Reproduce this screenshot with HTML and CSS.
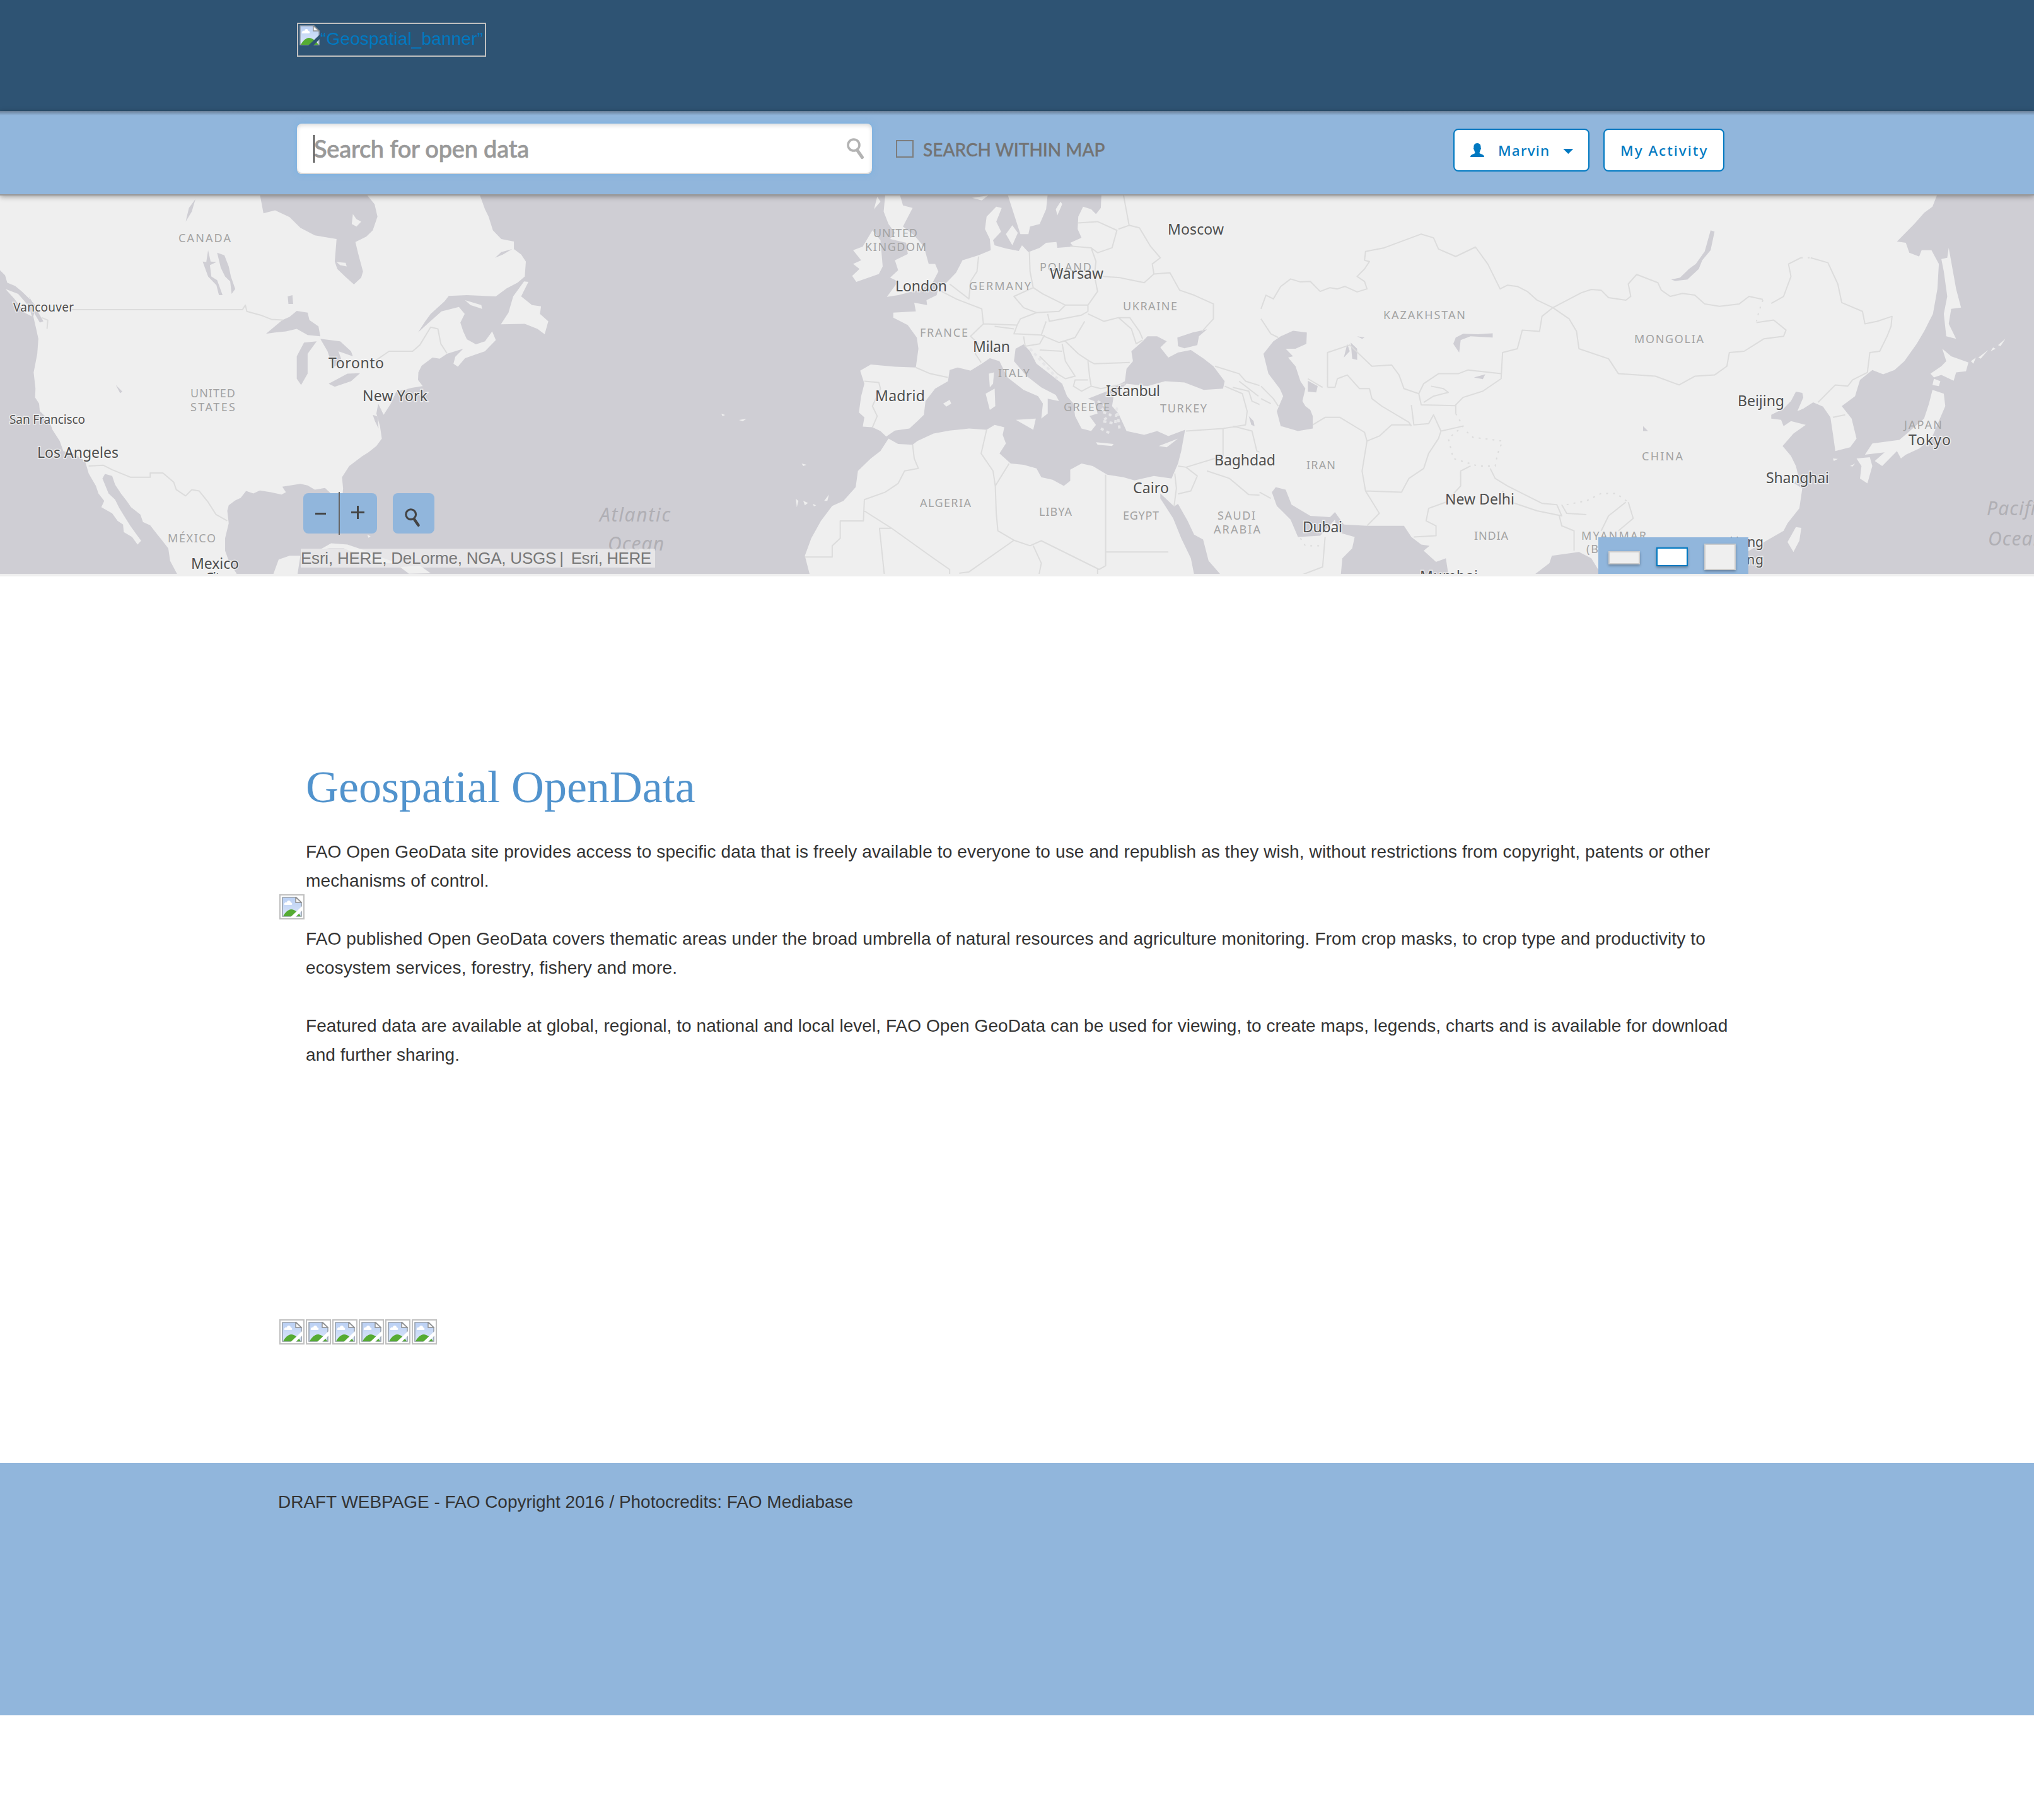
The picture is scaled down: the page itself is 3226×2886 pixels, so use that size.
FILE: index.html
```html
<!DOCTYPE html>
<html lang="en">
<head>
<meta charset="utf-8">
<title>Geospatial OpenData</title>
<link rel="stylesheet" href="styles.css">
</head>
<body>
<svg class="defs" width="0" height="0" aria-hidden="true">
  <defs>
    <linearGradient id="sky" x1="0" y1="0" x2="0" y2="1"><stop offset="0" stop-color="#b9cff3"/><stop offset="1" stop-color="#dbe6fa"/></linearGradient>
    <mask id="tear"><rect width="32" height="32" fill="#fff"/><path d="M14 32 33 14 33 21 22 32Z" fill="#000"/></mask>
    <symbol id="broken" viewBox="0 0 32 32">
      <g mask="url(#tear)">
        <path d="M1 1H23L31 9V31H1Z" fill="url(#sky)" stroke="#96a0ac" stroke-width="1.6"/>
        <path d="M2 31C5 25 10 20 15 20S27 25 30 31Z" fill="#55ab33"/>
        <path d="M4 13C3 10 6 8 8 9 8 5 14 5 14 9 17 9 17 13 15 13Z" fill="#fff"/>
        <path d="M22 1V9H31Z" fill="#f7f7f7" stroke="#8c8c8c" stroke-width="1.4"/>
      </g>
    </symbol>
    <symbol id="lens" viewBox="0 0 28 34"><ellipse cx="11" cy="11" rx="9" ry="9" fill="none" stroke="currentColor" stroke-width="3.6"/><path d="M16.500 19 24.500 30.500" stroke="currentColor" stroke-width="5" stroke-linecap="round"/></symbol>
  </defs>
</svg>

<header class="banner">
  <a class="logo" href="#"><svg class="broken"><use href="#broken"/></svg><span>“Geospatial_banner”</span></a>
</header>

<nav class="toolbar">
  <div class="search"><i class="caret"></i><span class="placeholder">Search for open data</span><svg class="search-icon"><use href="#lens"/></svg></div>
  <label class="within"><i class="checkbox"></i><span>SEARCH WITHIN MAP</span></label>
  <div class="account">
    <button class="btn user"><svg class="person" viewBox="0 0 22 22"><path d="M11 0C15 0 17 3 16.500 7 17.500 7.500 17 10 16 10.500 15.500 13 14.500 14 14.500 16 17 17.500 22 18 22 22H0C0 18 5 17.500 7.500 16 7.500 14 6.500 13 6 10.500 5 10 4.500 7.500 5.500 7 5 3 7 0 11 0Z" fill="currentColor"/></svg><span>Marvin</span><i class="arrow"></i></button>
    <button class="btn activity">My Activity</button>
  </div>
</nav>

<section class="map">
  <svg class="tiles" viewBox="0 310 3226 600">
    <g transform="translate(0 300) scale(.574 .3954)">
      <path class="land" d="M-5 20V318L14 345 20 375 42 388 60 410 78 435 100 470 92 510 100 560 106 600 103 660 93 735 98 800 97 835 108 860 110 890 135 925 145 965 165 1010 175 1050 205 1062 235 1090 245 1140 265 1190 272 1220 288 1250 280 1275 310 1300 325 1330 340 1345 342 1375 365 1395 380 1425 390 1410 375 1380 360 1350 345 1315 330 1280 318 1245 300 1220 283 1160 290 1142 310 1150 318 1185 335 1222 350 1250 362 1275 388 1305 395 1335 415 1348 435 1385 465 1440 470 1490 490 1545H655L632 1490 622 1450 622 1400 632 1340 628 1290 632 1268 650 1248 665 1238 680 1210 700 1220 718 1208 748 1215 778 1225 790 1215 780 1193 830 1182 850 1188 870 1205 898 1198 925 1235 946 1235 948 1200 945 1155 965 1110 1000 1072 1018 1055 1040 1030 1055 1000 1050 950 1040 900 1045 860 1060 905 1080 860 1095 812 1140 796 1168 790 1155 765 1156 735 1165 708 1195 675 1215 680 1235 660 1280 640 1258 672 1253 700 1265 712 1285 678 1340 650 1370 605 1360 570 1340 610 1315 622 1290 602 1280 570 1272 535 1284 500 1268 472 1220 490 1185 535 1155 575 1175 530 1190 500 1228 450 1240 428 1290 425 1370 430 1400 398 1430 375 1450 350 1453 290 1440 262 1420 240 1420 210 1385 200 1362 165 1350 110 1340 80 1325 20H1012L1035 60 1043 110 1030 165 1012 190 982 212 990 260 1003 330 998 355 978 382 955 352 932 320 925 290 930 200 870 185 830 155 800 112 760 85 728 97 718 20Z"/>
      <path class="land" d="M15 400 50 420 80 470 88 510 68 495 40 440ZM1448 370 1460 372 1440 430 1470 465 1495 470 1492 500 1515 530 1505 582 1485 560 1450 540 1384 542 1405 495 1418 430ZM1285 445 1330 465 1332 480 1300 465ZM930 292 955 295 958 310 940 305ZM975 100 985 120 998 130 985 150 972 140ZM885 1445 915 1420 960 1425 1010 1450 1060 1480 1100 1500 1040 1500 1000 1470 950 1440 910 1440ZM1105 1515 1160 1510 1190 1540 1130 1542ZM755 1545 770 1485 800 1470 830 1470 822 1545ZM1015 1385 1024 1392 1018 1398Z"/>
      <path class="water" d="M540 40 530 90 513 130 522 75ZM600 255 620 265 632 310 638 350 650 400 640 420 636 370 622 350 610 315ZM560 290 570 292 575 245 582 290 598 292 580 305 584 350 600 365 615 425 605 425 598 385 575 350ZM795 430 808 425 810 460 797 460ZM735 580 780 525 800 512 820 488 850 495 855 525 880 550 885 590 850 585 820 560 790 570 760 575ZM820 670 840 615 875 610 850 660 850 740 832 785 820 760ZM885 600 940 610 970 650 975 670 935 650 945 690 920 715 905 650ZM908 780 960 740 995 738 970 770 925 792ZM320 785 338 812 332 818ZM1368 275 1385 252 1415 240 1390 262ZM1030 905 1043 912 1046 960 1036 930ZM80 430 96 470 108 500 120 530 110 535 96 500Z"/>
      <path class="border" d="M195 483H670L678 465 682 490 720 505 750 522 782 525M1035 690 1075 650 1140 650 1160 625 1190 553 1210 560 1218 620 1235 658M245 1110 285 1107 310 1125 360 1155 415 1155V1138H450L480 1175 487 1205 513 1230 530 1205 550 1210 575 1255 597 1305 628 1330M115 515 132 525 130 560"/>
    </g>
    <g transform="translate(1200 300) scale(.5102 .3954)">
      <path class="land" d="M1575 20H1072L1070 75 1055 100 1040 80 1015 70 1000 110 998 160 1010 195 975 215 985 230 935 235 932 212 900 215 880 235 845 252 825 225 815 248 775 238 740 225 735 205 760 170 745 130 762 75 745 70 715 110 710 160 725 200 728 245 690 265 640 285 620 335 590 375 565 390 560 425 528 445 530 465 490 455 495 490 425 495 425 515 470 545 498 595 503 640 495 715 430 712 355 703 322 728 335 780 325 830 318 895 335 915 330 952 360 955 385 970 403 992 430 968 475 960 500 930 520 905 525 850 555 800 595 770 600 725 625 715 665 728 700 700 725 678 755 690 780 755 830 805 875 830 890 860 885 920 905 900 905 840 940 850 930 825 885 795 840 750 800 690 805 640 830 622 850 650 870 700 920 750 950 780 965 830 985 860 990 910 1010 960 1040 970 1055 945 1035 910 1060 900 1050 850 1030 840 1070 820 1090 810 1145 770 1150 720 1170 690 1165 650 1200 610 1215 590 1245 590 1275 610 1255 635 1280 675 1310 655 1350 645 1390 680 1420 710 1455 770 1450 800 1390 805 1330 775 1270 770 1215 790 1150 780 1110 830 1105 870 1125 900 1150 970 1205 985 1245 970 1280 990 1332 965 1320 1050 1310 1100 1290 1160 1235 1150 1175 1168 1140 1155 1090 1145 1045 1110 1010 1100 975 1125 975 1170 955 1190 920 1165 885 1155 870 1120 830 1105 790 1100 755 1060 775 1020 765 985 770 955 740 945 715 965 660 960 600 968 550 980 500 1010 485 1025 440 1022 410 1000 385 1050 355 1080 315 1130 308 1195 270 1250 235 1270 200 1330 170 1400 150 1470 165 1545H1360L1350 1480 1320 1400 1295 1320 1255 1240 1255 1220 1298 1272 1310 1262 1340 1330 1360 1385 1388 1405 1405 1490 1442 1545H1575Z"/>
      <path class="land" d="M400 20 395 90 410 140 430 175 415 200 465 215 470 260 430 285 440 325 415 355 440 370 405 432 440 425 500 405 545 380 565 330 555 300 535 300 520 230 490 185 455 150 485 75 455 65 445 20ZM375 30 385 50 365 80ZM360 165 385 205 392 310 380 340 310 372 297 348 320 320 300 300 325 285 300 245 330 230ZM780 20 820 180 845 180 850 150 880 140 900 80 905 20ZM930 80 945 50 950 60 935 105ZM670 35 720 25 700 45ZM775 180 795 145 812 175 795 225ZM722 740 738 735 735 780 725 795ZM712 820 740 800 742 870 725 885ZM806 925 868 920 860 965ZM1055 1015 1110 1022 1105 1030 1060 1025ZM1250 1030 1310 1000 1275 1035ZM580 860 600 845 605 860 590 872ZM140 1100 155 1105 145 1110ZM210 1250 225 1225 220 1250ZM145 1250 160 1258 150 1268ZM175 1262 185 1268 178 1272ZM122 1242 130 1250 125 1275Z"/>
      <path class="water" d="M1308 595 1355 575 1400 562 1375 590 1370 625 1330 638 1310 630ZM1530 910 1545 930 1548 950 1538 945Z"/>
      <path class="speck" d="M1060 850 1085 870 1070 890 1100 905 1075 930 1115 940 1120 880 1128 960M850 640 900 710 935 760M1070 960 1100 980"/>
      <path class="border" d="M1000 135 1060 130 1120 165 1105 235 1060 255 1040 235 975 228M1140 20 1158 145 1125 160M1158 145 1190 155 1225 230 1255 275 1230 300 1235 340 1205 375 1130 355 1080 350 1060 345M1040 235 1055 290 1050 345 1060 410 1030 465 960 465 890 420 860 395 850 330 848 252M690 270 685 330 665 370 660 440 600 380M560 400 620 440 700 480 705 540 665 590 690 620 680 660 698 695M860 395 800 430 830 475 870 495 820 520 810 545 705 540M870 495 940 490 960 465M905 500 910 530 1010 505 1030 490 1030 465M1030 500 1080 530 1125 515 1165 560 1180 620 1200 605M1125 515 1160 515 1190 570 1200 600M1235 340 1285 335 1315 405 1360 425 1420 460 1420 520 1385 570M810 545 800 580 885 585 900 530M885 585 940 615 990 595 1020 530M740 550 800 560M830 590 835 630 880 620 895 585M880 645 950 650M950 620 960 690 990 750 960 760 935 740 880 670M960 610 1000 660 1035 690 1050 700 1160 695M1030 690 1035 750 1040 790 1010 810 985 790 990 765 1030 765M1040 790 1070 800 1145 780M495 715 540 740 595 755M335 770 380 775 385 800 360 870 375 910 360 955M485 1025 490 1080 503 1120 460 1130 440 1180 400 1215 335 1245 332 1330H260V1400L235 1430V1475H150M332 1288 420 1360 550 1480 600 1525 600 1545M420 1360H382L397 1545M715 965 698 1060 735 1130 742 1190 745 1300 750 1370 800 1408 660 1535 630 1540M785 1100 742 1190M800 1408 850 1430 885 1410 1065 1525 1085 1510V1145M1060 1545V1520M860 1430 885 1500 878 1545M1085 1455H1280M1300 1140 1305 1200 1298 1270M1310 1110 1335 1115 1450 1070 1450 960 1335 970M1450 960 1520 945 1525 890 1510 820 1455 790M1480 950 1540 970 1555 1050 1575 1060M1335 1115 1370 1150 1350 1210 1310 1222M1400 1130 1470 1160 1530 1225 1575 1228M1425 710 1500 740 1520 770 1570 790M1480 795 1530 810 1540 850 1575 870M1500 770 1560 830"/>
    </g>
    <g transform="translate(2000 300) scale(.7819 .3954)">
      <path class="land" d="M-3 20H1372L1362 70 1345 95 1325 140 1290 210 1308 215 1315 255 1335 270 1340 245 1360 245 1375 300 1372 400 1363 500 1345 570 1330 620 1305 690 1285 725 1262 742 1240 725 1215 765 1205 830 1178 870 1198 920 1208 1000 1195 1035 1165 1050 1160 980 1155 915 1140 872 1120 855 1100 880 1088 890 1100 835 1098 817 1085 812 1075 850 1060 880 1035 905 1035 920 1055 925 1060 950 1075 930 1105 945 1080 980 1058 1030 1075 1070 1085 1110 1090 1150 1082 1180 1098 1200 1092 1280 1068 1340 1060 1370 1025 1410 990 1450 960 1475 965 1545H690L670 1480 645 1455 590 1470 585 1500 555 1545H380L375 1480 355 1495 330 1450 342 1430 325 1425 305 1395 290 1350 215 1350 168 1345 150 1295 140 1315 100 1310 62 1265 50 1205 30 1195 22 1215 32 1270 60 1325 75 1395 120 1390 150 1325 155 1375 190 1395 185 1440 165 1480 162 1545H-3Z"/>
      <path class="water" d="M40 590 65 568 93 575 92 620 70 640 50 640 65 670 55 675 70 710 80 770 90 800 84 850 90 870 100 885 105 910 105 960 75 970 40 950 32 890 45 830 38 800 15 740 5 660 25 610ZM95 768 115 790 112 815 95 812ZM182 615 195 640 195 685 185 680ZM175 620 180 650 168 675ZM195 590 210 595 205 600ZM390 620 395 595 410 580 440 582 470 578 470 595 425 590 405 605 402 655ZM432 755 455 742 450 762ZM832 362 850 355 868 320 882 300 900 250 912 165 920 170 912 245 895 285 888 320 865 362 840 368ZM775 950 785 970 775 970Z"/>
      <path class="land" d="M1395 235 1400 290 1410 400 1420 475 1400 480 1395 540 1410 600 1390 590 1385 500 1392 430 1385 330 1380 280 1392 275ZM1382 640 1400 670 1435 695 1430 730 1410 735 1405 768 1380 745 1365 755 1358 740 1380 710 1390 690ZM1365 760 1378 770 1375 790 1362 785ZM1362 805 1385 820 1388 870 1375 930 1360 1000 1335 1040 1308 1065 1298 1080 1290 1050 1260 1110 1245 1090 1265 1055 1225 1065 1240 1020 1295 1005 1310 980 1345 920 1355 860ZM1208 1080 1235 1075 1240 1110 1230 1180 1215 1160 1218 1110ZM1085 1355 1096 1358 1092 1410 1080 1455 1068 1415ZM1440 690 1450 675 1445 700ZM1455 675 1475 645 1460 680ZM1480 650 1485 635 1490 640ZM1495 625 1510 600 1500 630ZM1160 1080 1170 1082 1162 1090ZM1195 1110 1205 1100 1200 1112Z"/>
      <path class="border" d="M0 520 20 580 35 595M0 480 10 425 25 440 40 390 60 360 80 372 100 370 120 410 140 395 155 400 170 390 195 412 215 400 210 370 195 350 210 320 220 290 210 285 212 250 250 235 325 180 350 195 360 240 395 270 435 232 460 300 485 400 500 385 520 390 540 410 560 445 592 475 650 415 670 402 690 405 705 435 740 445 750 430 745 380 762 342 805 375 812 405 830 430 855 418 880 425 900 460 930 470 970 460 990 430 1018 442M1035 458 1060 430 1075 350 1070 300 1095 275M1115 275 1150 295 1170 380 1178 455 1220 490 1225 540 1250 530 1280 510 1278 550 1270 590 1255 650 1235 655 1230 735 1200 765 1190 790 1165 785 1130 855M1005 535 1040 525 1065 565 1060 590 1020 600 980 650 950 655 945 710 920 745 880 750 848 785 800 750 725 740 705 680 645 640 640 570 625 520 592 475 570 510 565 570 530 565 520 640 490 655 487 760 450 810 410 835 395 865 395 900M135 795V655L180 625 225 710 265 705 280 745 290 800 320 820 330 780 360 740 400 740 420 725 487 740M135 795H150L155 760 175 745 200 800 220 800 225 840 245 870 300 935 305 950M125 795 95 760M320 820 325 865 395 868M345 790 370 800 380 815 350 830 330 855M305 865 310 945 340 940 350 905 365 970 410 950M105 945 130 915 160 915 210 975 215 1010 240 990 265 945 305 945M215 1010 205 1130 212 1210 240 1300 215 1350M212 1210 285 1215 300 1160 330 1120 340 1060 360 1000 365 970M425 1110 405 1130 405 1190 375 1255 340 1280 335 1330 355 1350 355 1390 310 1395M465 1120 475 1160 500 1190 540 1230 570 1260 600 1265 610 1310 560 1290 500 1250 490 1210M610 1265 620 1300 660 1305M605 1310 610 1350 635 1370 635 1450M745 1255 755 1320 725 1370M740 1255 705 1310 690 1370M1160 915 1185 905M85 1545 125 1515 130 1395M-3 1215 20 1240M0 790 25 840 35 870M0 840 20 860"/>
      <path class="border dots" d="M1018 445 1010 490 1005 530M395 900 410 950 380 1000 390 1080 440 1110 475 1110 480 1060 490 1010 430 995 410 960M620 1265 660 1250 690 1220 720 1220 745 1255M1095 275 1115 275M80 1400 90 1430 125 1430"/>
    </g>
    <path class="land" d="M1144 656 1150 658 1146 660ZM1172 666 1184 664 1178 668Z"/>
    <g class="country">
      <text x="283" y="384" textLength="83">CANADA</text><text x="302" y="630" textLength="71">UNITED</text><text x="302" y="652" textLength="71">STATES</text><text x="266" y="860" textLength="76">MÉXICO</text>
      <text x="1385" y="376" textLength="70">UNITED</text><text x="1372" y="398" textLength="97">KINGDOM</text><text x="1537" y="460" textLength="98">GERMANY</text><text x="1649" y="430" textLength="82">POLAND</text><text x="1781" y="492" textLength="86">UKRAINE</text><text x="1459" y="534" textLength="76">FRANCE</text><text x="1583" y="598" textLength="50">ITALY</text><text x="1687" y="652" textLength="73">GREECE</text><text x="1840" y="654" textLength="74">TURKEY</text><text x="1459" y="804" textLength="81">ALGERIA</text><text x="1648" y="818" textLength="52">LIBYA</text><text x="1781" y="824" textLength="57">EGYPT</text><text x="1931" y="824" textLength="60">SAUDI</text><text x="1925" y="846" textLength="74">ARABIA</text>
      <text x="2194" y="506" textLength="130">KAZAKHSTAN</text><text x="2592" y="544" textLength="110">MONGOLIA</text><text x="3020" y="680" textLength="60">JAPAN</text><text x="2072" y="744" textLength="46">IRAN</text><text x="2604" y="730" textLength="65">CHINA</text><text x="2338" y="856" textLength="54">INDIA</text><text x="2508" y="856" textLength="103">MYANMAR</text><text x="2516" y="877" textLength="86">(BURMA)</text>
    </g>
    <g class="city">
      <text class="minor" x="21" y="494" textLength="96">Vancouver</text><text class="minor" x="15" y="672" textLength="120">San Francisco</text>
      <text x="521" y="584" textLength="88">Toronto</text><text x="575" y="636" textLength="103">New York</text><text x="59" y="726" textLength="129">Los Angeles</text><text x="303" y="902" textLength="76">Mexico</text><text x="325" y="925" textLength="34">City</text>
      <text x="1420" y="462" textLength="82">London</text><text x="1665" y="442" textLength="85">Warsaw</text><text x="1852" y="372" textLength="89">Moscow</text><text x="1543" y="558" textLength="59">Milan</text><text x="1388" y="636" textLength="79">Madrid</text><text x="1754" y="628" textLength="86">Istanbul</text><text x="1797" y="782" textLength="57">Cairo</text><text x="1926" y="738" textLength="97">Baghdad</text>
      <text x="2756" y="644" textLength="74">Beijing</text><text x="3027" y="706" textLength="67">Tokyo</text><text x="2801" y="766" textLength="100">Shanghai</text><text x="2292" y="800" textLength="110">New Delhi</text><text x="2066" y="844" textLength="63">Dubai</text><text x="2252" y="922" textLength="92">Mumbai</text><text class="lower" x="2743" y="867" textLength="54">Hong</text><text class="lower" x="2743" y="895" textLength="54">Kong</text>
    </g>
    <g class="ocean">
      <text x="951" y="827" textLength="112">Atlantic</text><text x="964" y="873" textLength="89">Ocean</text><text x="3151" y="817" textLength="92">Pacific</text><text x="3153" y="865" textLength="89">Ocean</text>
    </g>
  </svg>
  <div class="zoom"><button class="minus"><i></i></button><button class="plus"><i></i></button></div>
  <button class="locate"><svg><use href="#lens"/></svg></button>
  <div class="credits"><span>Esri, HERE, DeLorme, NGA, USGS</span><span class="bar">|</span><span class="here">Esri, HERE</span></div>
  <div class="sizes"><i class="small"></i><i class="medium"></i><i class="large"></i></div>
</section>

<main class="content">
  <svg class="broken framed side"><use href="#broken"/></svg>
  <article class="intro">
    <h1>Geospatial OpenData</h1>
    <p>FAO Open GeoData site provides access to specific data that is freely available to everyone to use and republish as they wish, without restrictions from copyright, patents or other<br>mechanisms of control.</p>
    <p>FAO published Open GeoData covers thematic areas under the broad umbrella of natural resources and agriculture monitoring. From crop masks, to crop type and productivity to<br>ecosystem services, forestry, fishery and more.</p>
    <p class="featured">Featured data are available at global, regional, to national and local level, FAO Open GeoData can be used for viewing, to create maps, legends, charts and is available for download<br>and further sharing.</p>
  </article>
  <div class="thumbs">
    <svg class="broken framed"><use href="#broken"/></svg><svg class="broken framed"><use href="#broken"/></svg><svg class="broken framed"><use href="#broken"/></svg><svg class="broken framed"><use href="#broken"/></svg><svg class="broken framed"><use href="#broken"/></svg><svg class="broken framed"><use href="#broken"/></svg>
  </div>
</main>

<footer class="footer">DRAFT WEBPAGE - FAO Copyright 2016 / Photocredits: FAO Mediabase</footer>
</body>
</html>
```
FILE: styles.css
```css
* { box-sizing: border-box; }
body { margin: 0; min-height: 2886px; background: #fff; color: #333; font: 28px/46px "Liberation Sans", Arial, sans-serif; }
button { font: inherit; color: inherit; padding: 0; border: 0; }
i { display: block; font-style: normal; }
.defs { position: absolute; }

.banner { height: 176px; padding: 36px 0 0 471px; background: #2e5373; }
.logo { display: flex; align-items: flex-start; width: 300px; height: 54px; padding: 2px; border: 2px solid #c0c0c0; color: #0079c1; letter-spacing: .15px; line-height: 44px; text-decoration: none; white-space: nowrap; }
.logo span { margin-left: 1px; }
.broken { flex: none; display: block; width: 32px; height: 32px; }
.framed { width: 40px; height: 40px; padding: 2px; border: 2px solid #c0c0c0; }

.toolbar { position: relative; z-index: 2; display: flex; align-items: flex-start; height: 134px; padding: 20px 491px 0 471px; background: linear-gradient(rgba(80, 90, 105, .6), rgba(80, 90, 105, 0) 7px), #91b6dc; border-bottom: 2px solid #999; box-shadow: 0 2px 8px rgba(0, 0, 0, .35); }
.search { display: flex; align-items: center; width: 912px; height: 80px; padding: 0 11px 0 26px; border-radius: 8px; background: #fff; box-shadow: inset 0 3px 6px rgba(0, 0, 0, .14), inset 0 -2px 0 #ddd, 0 0 10px rgba(102, 175, 233, .6); }
.caret { width: 2px; height: 44px; background: #444; }
.placeholder { margin: -2px 0 0 -1px; color: #999; font: 500 38px/78px Lato, sans-serif; letter-spacing: -.25px; -webkit-text-stroke: .7px #999; white-space: nowrap; }
.search-icon { width: 30px; height: 34px; margin-left: auto; color: #b3b3b3; }
.within { display: flex; align-items: center; gap: 15px; margin: 20px 0 0 38px; color: #737373; font: 500 28px/42px Lato, sans-serif; -webkit-text-stroke: .4px #737373; white-space: nowrap; }
.checkbox { width: 28px; height: 28px; margin-top: -2px; border: 2px solid #7d7d7d; }
.account { display: flex; gap: 22px; margin: 8px 0 0 auto; }
.btn { display: flex; align-items: center; height: 68px; border: 2px solid #0079c1; border-radius: 8px; background: #fff; color: #0079c1; font: 500 22.5px/64px "Noto Sans", sans-serif; white-space: nowrap; }
.user { width: 216px; padding-left: 25px; letter-spacing: 1.2px; }
.user span { margin-top: 2px; }
.person { width: 22px; height: 22px; margin-right: 22px; }
.arrow { width: 16px; height: 8px; margin: 4px 0 0 21px; background: #0079c1; clip-path: polygon(0 0, 100% 0, 50% 100%); }
.activity { width: 192px; padding: 2px 0 0 25px; letter-spacing: 2px; }

.map { position: relative; height: 604px; border-bottom: 4px solid #efefef; background: #cfced4; overflow: hidden; }
.tiles { display: block; width: 3226px; height: 600px; font-family: "Noto Sans", sans-serif; }
.land { fill: #efefef; }
.water { fill: #cfced4; }
.border, .speck { fill: none; stroke: #dcdcdc; stroke-width: 2px; stroke-linejoin: round; vector-effect: non-scaling-stroke; }
.dots { stroke-dasharray: 3 8; }
.speck { stroke: #e6e6e8; stroke-width: 4px; stroke-dasharray: 5 5; }
.country { fill: #a3a3a3; font-size: 18px; }
.city { fill: #4f4f4f; font-size: 23px; stroke: rgba(245, 245, 245, .75); stroke-width: 3px; paint-order: stroke; }
.minor { font-size: 19px; }
.lower { font-size: 21px; }
.ocean { fill: #b0afb4; font-size: 30px; font-style: italic; }
.zoom { position: absolute; left: 481px; top: 472px; display: flex; width: 117px; height: 64px; }
.zoom button { position: relative; display: flex; align-items: center; justify-content: center; background: #91b6dc; }
.minus { width: 58px; border-radius: 8px 0 0 8px; }
.plus { width: 59px; border-radius: 0 8px 8px 0; }
.plus::before { content: ""; position: absolute; left: -2px; top: -2px; width: 2px; height: 68px; background: #666; }
.minus i { width: 17px; height: 3px; margin: 0 3px 0 0; background: #444; }
.plus i { width: 21px; height: 21px; margin: -4px 2px 0 0; background: linear-gradient(#444, #444) center / 100% 3px no-repeat, linear-gradient(#444, #444) center / 3px 100% no-repeat; }
.locate { position: absolute; left: 623px; top: 472px; display: flex; align-items: flex-start; width: 66px; height: 64px; padding: 24px 0 0 19px; border-radius: 8px; background: #91b6dc; color: #444; }
.locate svg { display: block; flex: none; width: 28px; height: 34px; transform: scale(.88); transform-origin: 0 0; }
.credits { position: absolute; left: 477px; top: 560px; display: flex; width: 562px; height: 30px; background: rgba(240, 240, 240, .72); color: #777; font-size: 26px; letter-spacing: -.22px; line-height: 31px; white-space: nowrap; }
.bar { margin: 0 12px 0 5px; }
.here { letter-spacing: -.45px; }
.sizes { position: absolute; left: 2535px; top: 542px; display: flex; align-items: center; gap: 26px; width: 238px; height: 58px; padding: 6px 16px 0; background: #91b6dc; }
.sizes i { width: 50px; border: 2px solid #ccc; background: #efefef; box-shadow: 0 2px 4px rgba(0, 0, 0, .3); }
.sizes .small { height: 21px; }
.sizes .medium { height: 30px; margin-top: -2px; border-color: #0079c1; background: #fff; }
.sizes .large { height: 42px; margin-top: -2px; }

.content { display: grid; grid-template-columns: 42px 1fr; grid-template-rows: 1178px 1fr; height: 1406px; padding-left: 443px; }
.side { margin-top: 504px; }
.intro { padding-top: 292px; white-space: nowrap; }
h1 { margin: 0 0 38px; color: #5193cd; font: 400 72px/84px "Liberation Serif", serif; }
p { margin: 0 0 46px; letter-spacing: .13px; }
.featured { letter-spacing: .06px; }
.thumbs { grid-column: 1 / -1; display: flex; gap: 2px; }
.footer { height: 400px; padding: 39px 0 0 441px; background: #91b6dc; letter-spacing: -.03px; }
```
